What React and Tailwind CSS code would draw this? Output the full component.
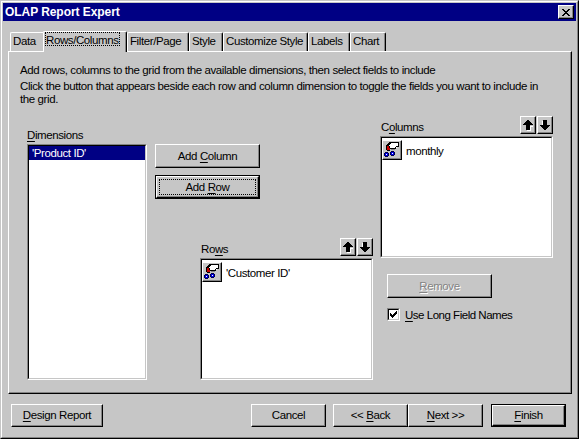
import React from 'react';

const raised = 'border border-l-white border-t-white border-r-black border-b-black shadow-[inset_-1px_-1px_0_#848484] bg-[#c6c6c6]';

function U({ children }) {
  return <span className="underline decoration-1 underline-offset-2">{children}</span>;
}

function Button({ className, children }) {
  return (
    <button className={`flex shrink-0 items-center justify-center whitespace-nowrap ${raised} ${className}`}>
      {children}
    </button>
  );
}

function DefaultButton({ className, focused, children }) {
  return (
    <div className={`flex shrink-0 border border-black ${className}`}>
      <Button className="flex-1 p-[2px]">
        <span className={`flex h-full w-full items-center justify-center border border-dotted ${focused ? 'border-black' : 'border-transparent'}`}>
          {children}
        </span>
      </Button>
    </div>
  );
}

function ListBox({ className, children }) {
  return (
    <div className={`border border-l-[#848484] border-t-[#848484] border-r-white border-b-white ${className}`}>
      <div className="h-full border border-l-black border-t-black border-r-[#c6c6c6] border-b-[#c6c6c6] bg-white">{children}</div>
    </div>
  );
}

function Arrow({ down }) {
  return (
    <div className={`flex h-[18px] w-4 items-center justify-center ${raised}`}>
      <svg width="12" height="12" viewBox="0 0 12 12" shapeRendering="crispEdges">
        {down ? (
          <>
            <path fill="#fff" d="M3 2h1v5H3zM1 6h3v1H1z" />
            <path d="M4 1h4v5h3v1h-1v1H9v1H8v1H7v1H5v-1H4V9H3V8H2V7H1V6h3z" />
          </>
        ) : (
          <>
            <path fill="#fff" d="M8 7h3v1H8zM8 8h1v4H5v-1h3z" />
            <path d="M5 1h2v1h1v1h1v1h1v1h1v1H8v5H4V6H1V5h1V4h1V3h1V2h1z" />
          </>
        )}
      </svg>
    </div>
  );
}

function ArrowPair() {
  return (
    <div className="flex gap-px">
      <Arrow />
      <Arrow down />
    </div>
  );
}

function FieldButton() {
  return (
    <div className={`h-5 w-5 shrink-0 ${raised}`}>
      <svg width="18" height="18" viewBox="1 1 18 18" shapeRendering="crispEdges">
        <path fill="#fff" d="M9 3h7v4h-1v1H8V6H7V5h1V4h1z" />
        <path d="M7 2h10v1H9v1H8v1H7v1H4V5h1V4h1V3h1zM16 3h1v4h-1zM14 6h2v1h-2zM13 7h1v1h-1zM8 8h6v1H8zM4 6h1v4H4zM7 6h1v2H7zM5 10h3v1H5z" />
        <path fill="#c60000" d="M5 6h2v2h1v2H5z" />
        <path fill="#848484" d="M9 9h4v1H9z" />
        <path fill="#000042" d="M3 12h3v1h1v3H6v1H3v-1H2v-3h1zM9 11h3v1h1v3h-1v1H9v-1H8v-3h1z" />
        <path fill="#0000e0" d="M3 13h3v3H3zM9 12h3v3H9z" />
        <path fill="#fff" d="M4 14h1v1H4zM10 13h1v1h-1z" />
      </svg>
    </div>
  );
}

function FieldList({ label, field, className }) {
  return (
    <div className="w-[173px]">
      <div className="flex h-5 justify-between">
        <div className="pl-px pt-1">{label}</div>
        <ArrowPair />
      </div>
      <ListBox className={className}>
        <div className="flex h-[22px] items-center pt-[2px]">
          <FieldButton />
          <span className="whitespace-nowrap pl-1 pt-[2px]">{field}</span>
        </div>
      </ListBox>
    </div>
  );
}

function Tab({ className, children }) {
  return (
    <div className={`h-[19px] shrink-0 whitespace-nowrap rounded-t-[2px] border border-b-0 border-l-white border-t-white border-r-black pl-[2px] pt-px shadow-[inset_-1px_0_0_#848484] ${className}`}>
      {children}
    </div>
  );
}

export default function App() {
  return (
    <div className="h-[439px] w-[579px] overflow-hidden border border-l-[#c6c6c6] border-t-[#c6c6c6] border-r-black border-b-black bg-[#c6c6c6] font-['Liberation_Sans',Arial,sans-serif] text-[11.5px] leading-[15px] tracking-[-0.4px] text-black">
      <div className="flex h-full flex-col border border-l-white border-t-white border-r-[#848484] border-b-[#848484] p-px">
        <header className="flex h-[18px] shrink-0 items-center justify-between bg-[#000084] pl-[2px] pr-[2px] text-white">
          <h1 className="text-[12px] font-bold tracking-[-0.06px]">OLAP Report Expert</h1>
          <div className={`flex h-[14px] w-4 items-center justify-center ${raised}`}>
            <svg width="8" height="7" viewBox="0 0 8 7" shapeRendering="crispEdges" fill="#000">
              <path d="M0 0h2v1h1v1h2V1h1V0h2v1H7v1H6v1H5v1h1v1h1v1h1v1H6V6H5V5H3v1H2v1H0V6h1V5h1V4h1V3H2V2H1V1H0z" />
            </svg>
          </div>
        </header>

        <main className="flex flex-col pl-[5px] pt-[10px]">
          <nav className="flex h-5 items-end pl-[2px]">
            <div className="h-[19px] w-[33px] shrink-0 rounded-tl-[2px] border-l border-t border-white pl-[2px] pt-px">Data</div>
            <div className="z-10 -mb-px h-[21px] w-[84px] shrink-0 rounded-t-[2px] border border-b-0 border-l-white border-t-white border-r-black bg-[#c6c6c6] pl-px shadow-[inset_-1px_0_0_#848484]">
              <div className="h-[14px] w-[75px] whitespace-nowrap border border-dotted border-black leading-[14px]">Rows/Columns</div>
            </div>
            <Tab className="w-[62px]">Filter/Page</Tab>
            <Tab className="w-[34px]">Style</Tab>
            <Tab className="w-[85px]">Customize Style</Tab>
            <Tab className="w-[42px]">Labels</Tab>
            <Tab className="w-[36px]">Chart</Tab>
          </nav>

          <section className="h-[343px] w-[564px] border border-l-white border-t-white border-r-black border-b-black pl-[11px] pt-[11px] shadow-[inset_-1px_-1px_0_#848484]">
            <div className="h-[53px] whitespace-nowrap">
              <p className="h-4">Add rows, columns to the grid from the available dimensions, then select fields to include</p>
              <p className="pt-px leading-[13px]">
                Click the button that appears beside each row and column dimension to toggle the fields you want to include in
                <br />
                the grid.
              </p>
            </div>

            <div className="flex pl-[7px]">
              <div className="w-[120px] pt-3">
                <div className="h-4"><U>D</U>imensions</div>
                <ListBox className="h-[236px]">
                  <div className="h-[14px] bg-[#000084] pl-[3px] leading-[15px] text-white">'Product ID'</div>
                </ListBox>
              </div>

              <div className="ml-2 flex w-[218px] flex-col pt-7">
                <Button className="h-6 w-[105px]"><span>Add <U>C</U>olumn</span></Button>
                <DefaultButton focused className="mt-[7px] h-6 w-[105px]"><span>Add <U>R</U>ow</span></DefaultButton>
                <div className="mt-[39px] self-end">
                  <FieldList label={<>Ro<U>w</U>s</>} field="'Customer ID'" className="h-[122px]" />
                </div>
              </div>

              <div className="ml-[7px] w-[173px]">
                <FieldList label={<>C<U>o</U>lumns</>} field="monthly" className="h-[122px]" />
                <div className="pl-[7px] pt-4">
                  <Button className="h-6 w-[105px] text-[#848484] [text-shadow:1px_1px_0_#fff]"><span><U>R</U>emove</span></Button>
                  <div className="mt-[10px] flex h-[13px] items-center">
                    <div className="h-[13px] w-[13px] border border-l-[#848484] border-t-[#848484] border-r-white border-b-white">
                      <div className="flex h-full items-center justify-center border border-l-black border-t-black border-r-[#c6c6c6] border-b-[#c6c6c6] bg-white">
                        <svg width="7" height="7" viewBox="0 0 7 7" shapeRendering="crispEdges">
                          <path d="M6 0h1v3H6v1H5v1H4v1H3v1H2V6H1V5H0V2h1v1h1v1h1V3h1V2h1V1h1z" />
                        </svg>
                      </div>
                    </div>
                    <span className="whitespace-nowrap pl-[5px] pt-[2px] tracking-[-0.48px]"><U>U</U>se Long Field Names</span>
                  </div>
                </div>
              </div>
            </div>
          </section>
        </main>

        <footer className="flex pl-2 pt-[10px]">
          <Button className="h-[23px] w-[92px]"><span><U>D</U>esign Report</span></Button>
          <Button className="ml-[148px] h-[23px] w-[75px]">Cancel</Button>
          <Button className="ml-[7px] h-[23px] w-[75px]"><span>&lt;&lt; <U>B</U>ack</span></Button>
          <Button className="h-[23px] w-[75px]"><span><U>N</U>ext &gt;&gt;</span></Button>
          <DefaultButton className="ml-2 h-[23px] w-[75px]"><span><U>F</U>inish</span></DefaultButton>
        </footer>
      </div>
    </div>
  );
}
